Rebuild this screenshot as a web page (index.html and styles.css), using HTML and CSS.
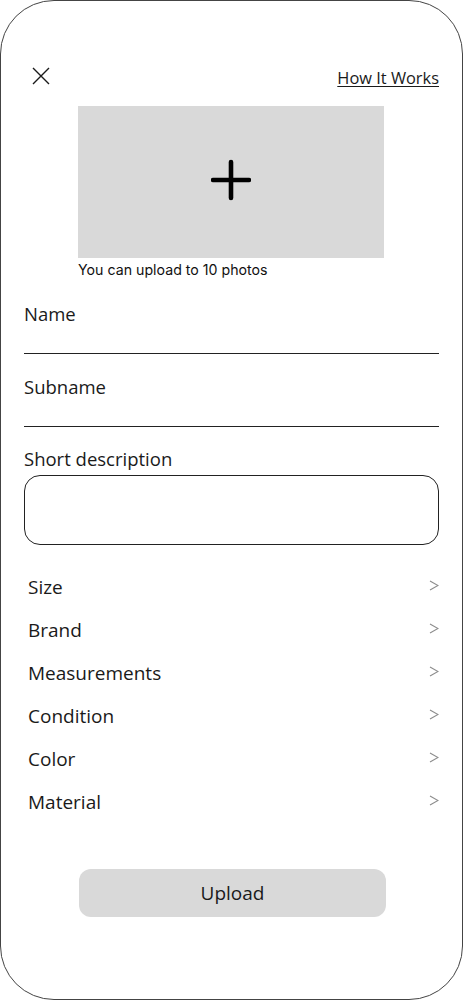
FILE: index.html
```html
<!DOCTYPE html>
<html>
<head>
<meta charset="utf-8">
<link rel="stylesheet" href="styles.css">
</head>
<body>
<div class="screen">
  <div class="header">
    <svg class="close" width="18" height="18" viewBox="0 0 18 18"><path d="M1 1 L17 17 M17 1 L1 17" stroke="#1a1a1a" stroke-width="1.4" fill="none"/></svg>
    <a class="how" href="#">How It Works</a>
  </div>
  <div class="photo">
    <svg class="plus" width="40" height="42" viewBox="0 0 40 42"><path d="M20 3 V39 M2 21 H38" stroke="#000" stroke-width="4.6" stroke-linecap="round" fill="none"/></svg>
  </div>
  <div class="caption">You can upload to 10 photos</div>
  <div class="field">
    <div class="label">Name</div>
  </div>
  <div class="field">
    <div class="label">Subname</div>
  </div>
  <div class="desc">
    <div class="label">Short description</div>
    <div class="textbox"></div>
  </div>
  <div class="list">
    <div class="row"><span>Size</span><svg class="chev" width="10" height="11" viewBox="0 0 10 11"><path d="M1 1 L9 5.5 L1 10" stroke="#8c8c8c" stroke-width="1.1" fill="none"/></svg></div>
    <div class="row"><span>Brand</span><svg class="chev" width="10" height="11" viewBox="0 0 10 11"><path d="M1 1 L9 5.5 L1 10" stroke="#8c8c8c" stroke-width="1.1" fill="none"/></svg></div>
    <div class="row"><span>Measurements</span><svg class="chev" width="10" height="11" viewBox="0 0 10 11"><path d="M1 1 L9 5.5 L1 10" stroke="#8c8c8c" stroke-width="1.1" fill="none"/></svg></div>
    <div class="row"><span>Condition</span><svg class="chev" width="10" height="11" viewBox="0 0 10 11"><path d="M1 1 L9 5.5 L1 10" stroke="#8c8c8c" stroke-width="1.1" fill="none"/></svg></div>
    <div class="row"><span>Color</span><svg class="chev" width="10" height="11" viewBox="0 0 10 11"><path d="M1 1 L9 5.5 L1 10" stroke="#8c8c8c" stroke-width="1.1" fill="none"/></svg></div>
    <div class="row"><span>Material</span><svg class="chev" width="10" height="11" viewBox="0 0 10 11"><path d="M1 1 L9 5.5 L1 10" stroke="#8c8c8c" stroke-width="1.1" fill="none"/></svg></div>
  </div>
  <div class="btn">Upload</div>
</div>
</body>
</html>
```

FILE: styles.css
```css
html, body {
  margin: 0;
  padding: 0;
  background: #fff;
}
.screen {
  width: 463px;
  height: 1000px;
  box-sizing: border-box;
  border: 1px solid #444;
  border-radius: 54px;
  padding: 0 23px;
  font-family: "Open Sans", "Noto Sans", sans-serif;
  color: #1a1a1a;
  overflow: hidden;
}
.header {
  margin-top: 64px;
  height: 20px;
  display: flex;
  justify-content: space-between;
  align-items: center;
}
.close {
  display: block;
  margin-left: 8px;
  margin-top: 2px;
}
.how {
  font-size: 16.4px;
  line-height: 20px;
  color: #1a1a1a;
  text-decoration: underline;
  text-underline-offset: 2px;
  margin-top: 5px;
}
.photo {
  margin-top: 21px;
  margin-left: 54px;
  width: 306px;
  height: 152px;
  background: #d9d9d9;
  display: flex;
  align-items: center;
  justify-content: center;
}
.plus {
  display: block;
  margin-top: -4px;
}
.caption {
  margin-left: 54px;
  margin-top: 4px;
  font-family: Inter, "Liberation Sans", sans-serif;
  font-size: 14.2px;
  line-height: 16px;
  color: #111;
}
.label {
  font-size: 18.5px;
  line-height: 24px;
}
.field {
  margin-top: 24px;
  height: 51px;
  border-bottom: 1.3px solid #222;
}
.field + .field {
  margin-top: 21px;
}
.desc {
  margin-top: 20px;
}
.textbox {
  margin-top: 4px;
  height: 68px;
  border: 1px solid #222;
  border-radius: 16px;
}
.list {
  margin-top: 20px;
  padding-left: 4px;
}
.row {
  height: 43px;
  display: flex;
  justify-content: space-between;
  align-items: center;
  font-size: 19px;
}
.chev {
  display: block;
  margin-right: 0;
  margin-top: -3px;
}
.btn {
  margin-top: 46px;
  margin-left: 55px;
  width: 307px;
  height: 48px;
  border-radius: 12px;
  background: #d9d9d9;
  display: flex;
  align-items: center;
  justify-content: center;
  font-size: 19px;
}
```
